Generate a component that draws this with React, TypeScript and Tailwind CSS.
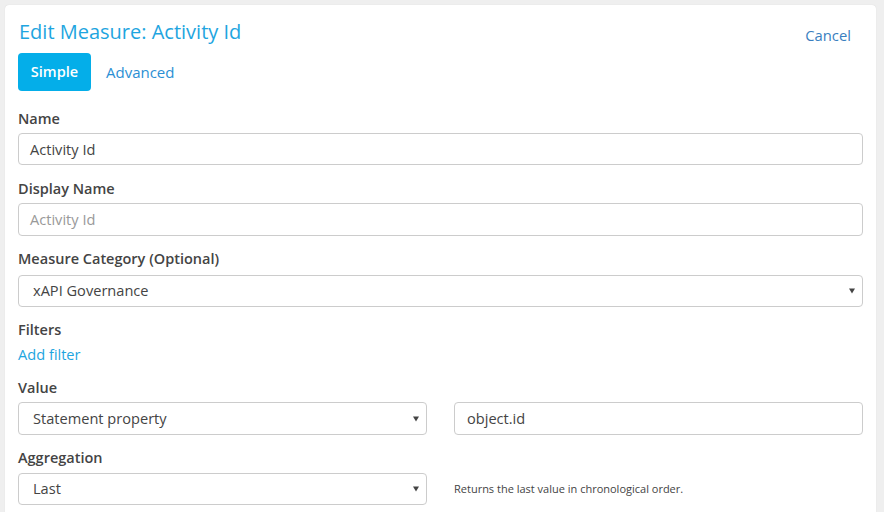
import React from "react";

const font = { fontFamily: '"Open Sans", "Noto Sans", sans-serif' };

function Caret() {
  return (
    <svg width="6" height="6" viewBox="0 0 6 6" className="absolute right-[7px] top-1/2 -translate-y-1/2">
      <path d="M0 0.5 H6 L3 5.5 Z" fill="#444" />
    </svg>
  );
}

function Label({ children }: { children: React.ReactNode }) {
  return <div className="h-[20px] leading-[20px] text-[14.5px] font-semibold text-[#444] mb-[4px]">{children}</div>;
}

function Input({ value, placeholder, h = "h-[32px]" }: { value?: string; placeholder?: string; h?: string }) {
  return (
    <div className={`${h} border border-[#ccc] rounded-[4px] flex items-center pl-[11px] pt-[1px] text-[14.6px] ${placeholder ? "text-[#999]" : "text-[#444]"}`}>
      {value ?? placeholder}
    </div>
  );
}

function Select({ value }: { value: string }) {
  return (
    <div className="relative h-[32px] border border-[#ccc] rounded-[4px] flex items-center pl-[14px] text-[14.6px] text-[#444]">
      {value}
      <Caret />
    </div>
  );
}

export default function App() {
  return (
    <div className="bg-[#efefef] h-[512px] w-[884px] pt-[5px] pl-[5px] overflow-hidden" style={font}>
      <div className="w-[871px] h-[520px] bg-white rounded-[4px] px-[13px] pt-[13px] shadow-[0_0_1px_rgba(0,0,0,0.15)]">
        <div className="flex justify-between">
          <div className="text-[20px] leading-[28px] text-[#1ea5e0] ml-[1px]">Edit Measure: Activity Id</div>
          <div className="text-[14.8px] leading-[20px] text-[#3a7fc0] mt-[7px] mr-[12px]">Cancel</div>
        </div>
        <div className="flex items-center mt-[7px]">
          <div className="w-[73px] h-[38px] rounded-[4px] bg-[#04aee9] text-white text-[14.5px] font-semibold flex items-center justify-center">Simple</div>
          <div className="ml-[15px] text-[15px] text-[#2b8fd4]">Advanced</div>
        </div>

        <div className="mt-[18px]">
          <Label>Name</Label>
          <Input value="Activity Id" />
        </div>
        <div className="mt-[14px]">
          <Label>Display Name</Label>
          <Input placeholder="Activity Id" h="h-[33px]" />
        </div>
        <div className="mt-[13px]">
          <div className="h-[20px] leading-[20px] text-[14.5px] font-semibold text-[#444] mb-[6px]">Measure Category (Optional)</div>
          <Select value="xAPI Governance" />
        </div>
        <div className="mt-[13px]">
          <div className="h-[20px] leading-[20px] text-[14.5px] font-semibold text-[#444]">Filters</div>
          <div className="h-[20px] leading-[20px] text-[14.6px] text-[#1ea5e0] mt-[4px]">Add filter</div>
        </div>
        <div className="mt-[14px]">
          <Label>Value</Label>
          <div className="grid grid-cols-2 gap-[27px]">
            <div className="relative h-[33px] border border-[#ccc] rounded-[4px] flex items-center pl-[14px] text-[14.6px] text-[#444]">
              Statement property
              <Caret />
            </div>
            <div className="h-[33px] border border-[#ccc] rounded-[4px] flex items-center pl-[12px] text-[14.6px] text-[#444]">object.id</div>
          </div>
        </div>
        <div className="mt-[13px]">
          <div className="h-[20px] leading-[20px] text-[14.5px] font-semibold text-[#444] mb-[5px]">Aggregation</div>
          <div className="grid grid-cols-2 gap-[27px]">
            <div className="relative h-[32px] border border-[#ccc] rounded-[4px] flex items-center pl-[14px] text-[14.6px] text-[#444]">
              Last
              <Caret />
            </div>
            <div className="flex items-center text-[11px] text-[#444]">Returns the last value in chronological order.</div>
          </div>
        </div>
      </div>
    </div>
  );
}
